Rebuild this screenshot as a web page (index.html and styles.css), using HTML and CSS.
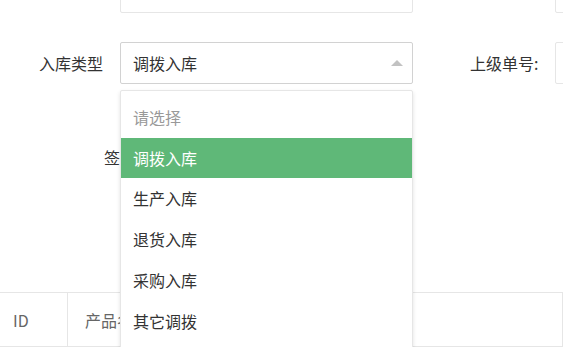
FILE: index.html
```html
<!DOCTYPE html>
<html lang="zh-CN">
<head>
    <meta charset="UTF-8">
    <meta name="viewport" content="width=device-width, initial-scale=1.0">
    <title>入库单</title>
    <link rel="stylesheet" href="styles.css">
</head>
<body>
    <div class="form">
        <div class="form-row">
            <div class="form-item">
                <label class="label"></label>
                <div class="field"><input class="input" type="text"></div>
            </div>
            <div class="form-item">
                <label class="label label-clip"></label>
                <div class="field field-side"><input class="input" type="text"></div>
            </div>
        </div>

        <div class="form-row">
            <div class="form-item">
                <label class="label">入库类型</label>
                <div class="field select open">
                    <div class="select-title">
                        <input class="input input-select" type="text" value="调拨入库" readonly>
                        <i class="caret"></i>
                    </div>
                    <dl class="options">
                        <dd class="placeholder">请选择</dd>
                        <dd class="selected">调拨入库</dd>
                        <dd>生产入库</dd>
                        <dd>退货入库</dd>
                        <dd>采购入库</dd>
                        <dd>其它调拨</dd>
                        <dd>其它入库</dd>
                    </dl>
                </div>
            </div>
            <div class="form-item">
                <label class="label label-clip">上级单号:</label>
                <div class="field field-side"><input class="input" type="text"></div>
            </div>
        </div>

        <div class="form-row">
            <div class="form-item">
                <label class="label label-left">签收人</label>
                <div class="field"></div>
            </div>
        </div>
    </div>

    <table class="table">
        <thead>
            <tr>
                <th class="col-id">ID</th>
                <th>产品名称</th>
                <th>数量</th>
            </tr>
        </thead>
    </table>
</body>
</html>
```

FILE: styles.css
```css
body {
    font-family: "Noto Sans CJK SC", "Noto Sans", sans-serif;
    font-size: 16px;
    color: #333;
    background-color: #fff;
    margin: 0;
    overflow: hidden;
}

.form {
    margin-top: -29px;
}

.form-row {
    display: flex;
    margin-bottom: 29px;
}

.form-row:nth-child(2) {
    margin-bottom: 52px;
}

.form-row:nth-child(3) {
    margin-bottom: 114px;
}

.form-item {
    display: flex;
    align-items: center;
}

.label {
    width: 103px;
    padding-right: 17px;
    text-align: right;
    white-space: nowrap;
}

.label-clip {
    width: 67px;
    margin-left: 57px;
    padding-right: 18px;
    text-align: left;
    overflow: hidden;
    box-sizing: content-box;
}

.label-left {
    padding-left: 104px;
    width: 16px;
    padding-right: 0;
    text-align: left;
}

.field {
    position: relative;
    width: 293px;
    height: 42px;
}

.field-side {
    width: 200px;
}

.input {
    display: block;
    box-sizing: border-box;
    width: 100%;
    height: 42px;
    padding: 0 12px;
    border: 1px solid #e6e6e6;
    border-radius: 2px;
    font: inherit;
    color: #333;
    background: #fff;
    outline: none;
}

.select-title {
    position: relative;
}

.input-select {
    border-color: #d2d2d2;
    padding-right: 34px;
}

.caret {
    position: absolute;
    right: 10px;
    top: 18px;
    width: 0;
    height: 0;
    border-style: solid;
    border-width: 0 6px 6px 6px;
    border-color: transparent transparent #c2c2c2 transparent;
}

.options {
    position: absolute;
    top: 48px;
    left: 0;
    right: 0;
    z-index: 10;
    margin: 0;
    padding: 6px 0;
    background: #fff;
    border: 1px solid #e6e6e6;
    border-radius: 2px;
    box-shadow: 0 2px 4px rgba(0, 0, 0, 0.12);
}

.options dd {
    margin: 0;
    padding: 0 12px;
    height: 41px;
    line-height: 41px;
    white-space: nowrap;
}

.options .placeholder {
    color: #999;
}

.options .selected {
    height: 40px;
    line-height: 40px;
    background-color: #5fb878;
    color: #fff;
}

.table {
    width: 100%;
    border-collapse: collapse;
    border-top: 1px solid #e6e6e6;
    border-bottom: 1px solid #e6e6e6;
}

.table th {
    height: 53px;
    padding: 0 17px;
    text-align: left;
    font-weight: normal;
    color: #666;
    border-right: 1px solid #e6e6e6;
}

.table .col-id {
    width: 37px;
    padding-left: 13px;
}
```
